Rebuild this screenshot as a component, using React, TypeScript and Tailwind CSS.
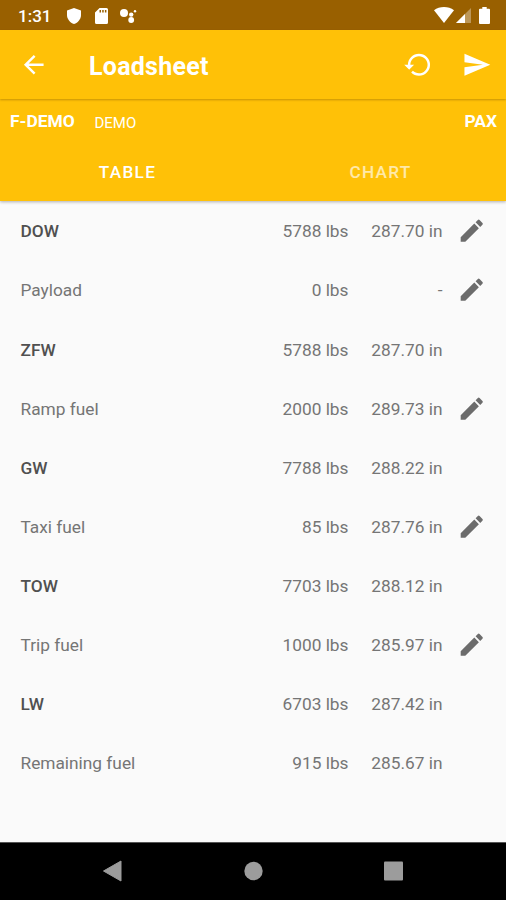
import React from 'react';

type Row = { label: string; weight: string; arm: string; bold?: boolean; editable?: boolean };

const rows: Row[] = [
  { label: 'DOW', weight: '5788 lbs', arm: '287.70 in', bold: true, editable: true },
  { label: 'Payload', weight: '0 lbs', arm: '-', editable: true },
  { label: 'ZFW', weight: '5788 lbs', arm: '287.70 in', bold: true },
  { label: 'Ramp fuel', weight: '2000 lbs', arm: '289.73 in', editable: true },
  { label: 'GW', weight: '7788 lbs', arm: '288.22 in', bold: true },
  { label: 'Taxi fuel', weight: '85 lbs', arm: '287.76 in', editable: true },
  { label: 'TOW', weight: '7703 lbs', arm: '288.12 in', bold: true },
  { label: 'Trip fuel', weight: '1000 lbs', arm: '285.97 in', editable: true },
  { label: 'LW', weight: '6703 lbs', arm: '287.42 in', bold: true },
  { label: 'Remaining fuel', weight: '915 lbs', arm: '285.67 in' },
];

function Icon({ d, className = '' }: { d: string; className?: string }) {
  return (
    <svg viewBox="0 0 24 24" fill="currentColor" className={`size-[29.5px] shrink-0 ${className}`}>
      <path d={d} />
    </svg>
  );
}

function StatusBar() {
  return (
    <div className="flex h-[30px] shrink-0 items-center bg-[#996000] pl-[18px] pr-[16px] text-white">
      <span className="w-[49px] pt-[2px] text-[17px] font-medium leading-none">1:31</span>
      <svg viewBox="0 0 14 16" className="mt-px h-4 w-3.5 fill-current">
        <path d="M7 0 14 2.6V7c0 4.200-3 7.700-7 9-4-1.300-7-4.800-7-9V2.600Z" />
      </svg>
      <svg viewBox="0 0 13 16" className="ml-3.5 mt-px h-4 w-[13px] fill-current">
        <path fillRule="evenodd" d="M4.500 0H11.500Q13 0 13 1.500V14.500Q13 16 11.500 16H1.500Q0 16 0 14.500V4.500ZM4.500 2V4.500H6V2ZM7.200 2V4.500H8.700V2ZM9.900 2V4.500H11.400V2Z" />
      </svg>
      <svg viewBox="0 0 17 15" className="ml-3 h-[15px] w-[17px] fill-current">
        <circle cx="4" cy="5" r="4" />
        <circle cx="11.200" cy="6.600" r="2.200" />
        <circle cx="11.200" cy="12" r="2.900" />
        <circle cx="15" cy="3.300" r="1.200" />
      </svg>
      <div className="flex-1" />
      <svg viewBox="0 0 20 16" className="h-4 w-5 fill-current">
        <path d="M0 3.200Q4.400 0 10 0T20 3.200L10 16Z" />
      </svg>
      <svg viewBox="0 0 15 15" className="ml-[2px] mt-px h-[15px] w-[15px] fill-current">
        <path d="M15 0V15H0Z" opacity=".35" />
        <path d="M9 6V15H0Z" />
      </svg>
      <svg viewBox="0 0 11 17" className="ml-[8px] h-[17px] w-[11px] fill-current">
        <path d="M3.300 0H7.700V1.700H10Q11 1.700 11 2.700V16Q11 17 10 17H1Q0 17 0 16V2.700Q0 1.700 1 1.700H3.300Z" />
      </svg>
    </div>
  );
}

function AppBar() {
  return (
    <header className="relative z-10 flex h-[69px] shrink-0 items-center bg-[#ffc107] pl-[19px] pr-[14.500px] text-white shadow-[0_1px_2px_rgba(90,60,0,0.35)]">
      <Icon d="M20 11H7.830l5.590-5.590L12 4l-8 8 8 8 1.410-1.410L7.830 13H20v-2z" />
      <h1 className="ml-[40.500px] flex-1 pt-[3px] text-[25px] font-bold leading-none tracking-[0.250px]">Loadsheet</h1>
      <Icon
        className="mr-[29.500px]"
        d="M13 3a9 9 0 0 0-9 9H1l3.890 3.890.070.140L9 12H6c0-3.870 3.130-7 7-7s7 3.130 7 7-3.130 7-7 7c-1.930 0-3.680-.790-4.940-2.060l-1.420 1.420A8.954 8.954 0 0 0 13 21a9 9 0 0 0 0-18z"
      />
      <Icon d="M2.010 21 23 12 2.010 3 2 10l15 2-15 2z" />
    </header>
  );
}

function FlightHeader() {
  return (
    <section className="relative shrink-0 bg-[#ffc107] text-white shadow-[0_1px_3px_rgba(0,0,0,0.3)]">
      <div className="flex h-[44px] items-center pl-[10px] pr-[9px] pt-[2px] leading-none">
        <span className="w-[84.500px] text-[17.400px] font-bold">F-DEMO</span>
        <span className="flex-1 pt-[2px] text-[15px]">DEMO</span>
        <span className="text-[17.400px] font-bold">PAX</span>
      </div>
      <nav className="flex h-[58px] items-center pt-[2px] text-center text-[17.200px] font-medium leading-none tracking-[1.300px]">
        <span className="flex-1 pl-[2px]">TABLE</span>
        <span className="flex-1 pl-[2px] text-white/65">CHART</span>
      </nav>
    </section>
  );
}

export default function App() {
  return (
    <div className="flex h-[900px] w-[506px] flex-col overflow-hidden bg-[#fafafa] font-[Roboto,sans-serif]">
      <StatusBar />
      <AppBar />
      <FlightHeader />
      <main className="flex-1 pt-px text-[17.300px] leading-none text-[#757575]">
        {rows.map((row) => (
          <div key={row.label} className="flex h-[59.100px] items-center pl-[20.500px] pr-[19.500px]">
            <span className={row.bold ? 'flex-1 pt-px font-medium text-[#505050]' : 'flex-1 pt-px'}>{row.label}</span>
            <span className="w-[89.500px] pt-px text-right">{row.weight}</span>
            <span className="w-[94px] pt-px text-right">{row.arm}</span>
            <span className="ml-[14.500px] w-[29.500px]">
              {row.editable && (
                <Icon
                  className="-mt-px text-[#6c6c6c]"
                  d="M3 17.250V21h3.750L17.810 9.940l-3.750-3.750L3 17.250zM20.710 7.040a.996.996 0 0 0 0-1.410l-2.340-2.340a.996.996 0 0 0-1.410 0l-1.830 1.830 3.750 3.750 1.830-1.830z"
                />
              )}
            </span>
          </div>
        ))}
      </main>
      <footer className="h-[58px] shrink-0 border-t border-[#555] bg-black text-[#9c9c9c]">
        <svg viewBox="0 0 506 57" className="h-[57px] w-[506px] fill-current">
          <path d="M103.500 28 121 18V38Z" stroke="currentColor" strokeLinejoin="round" />
          <circle cx="253.500" cy="28" r="9.200" />
          <rect x="384" y="18.500" width="19" height="19" rx="1" />
        </svg>
      </footer>
    </div>
  );
}
